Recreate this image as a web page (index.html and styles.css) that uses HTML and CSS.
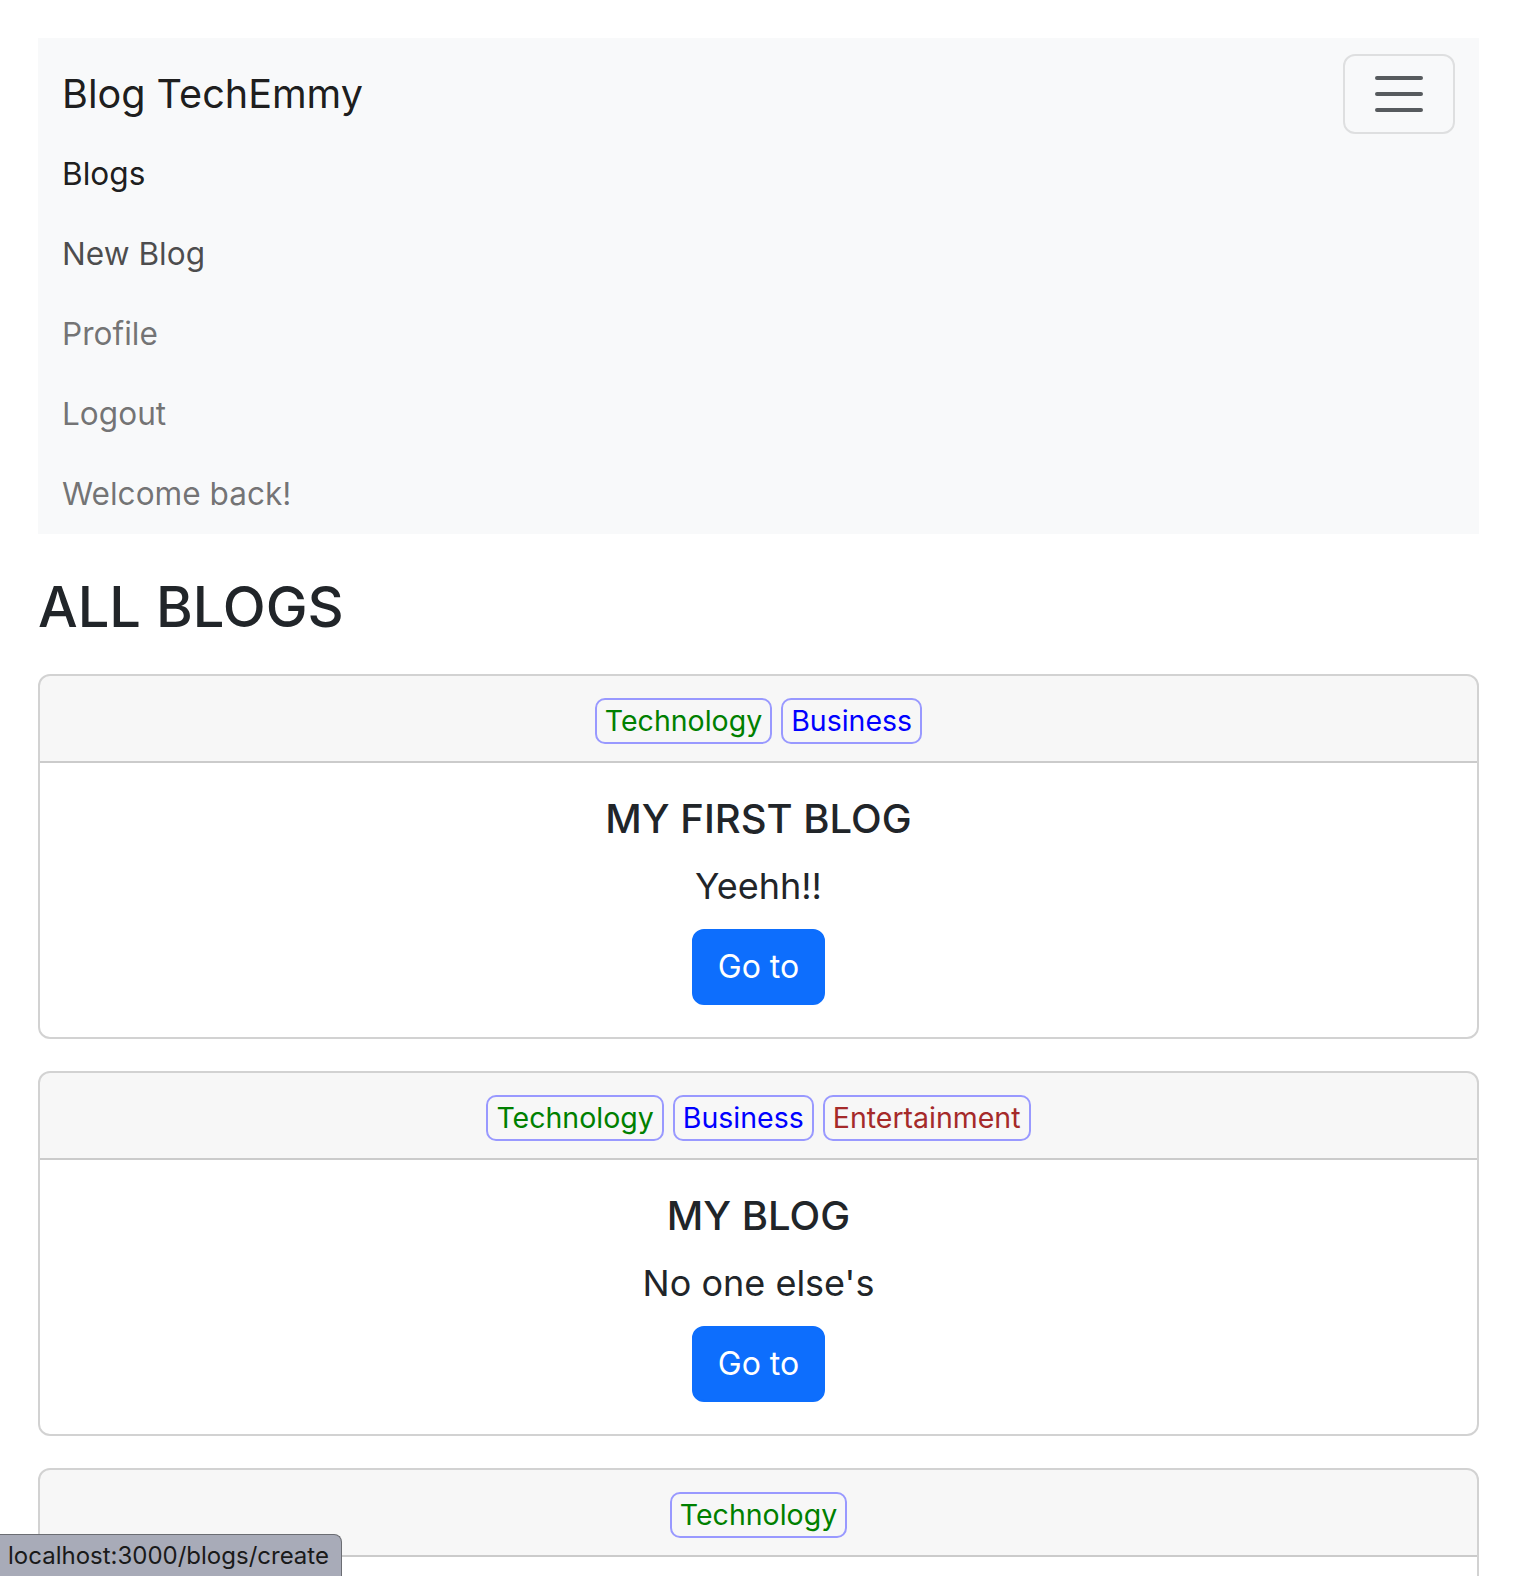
FILE: index.html
```html
<!DOCTYPE html>
<html lang="en">
<head>
<meta charset="utf-8">
<title>Blog TechEmmy</title>
<link rel="stylesheet" href="styles.css">
</head>
<body>
<div class="page">
  <nav class="navbar">
    <div class="nav-top">
      <a class="brand" href="#">Blog TechEmmy</a>
      <button class="toggler" aria-label="Toggle navigation">
        <svg class="toggler-icon" viewBox="0 0 30 30" width="60" height="60"><path d="M4 7h22M4 15h22M4 23h22" stroke="rgba(33,37,41,0.75)" stroke-width="2" stroke-linecap="round" fill="none"/></svg>
      </button>
    </div>
    <ul class="nav-list">
      <li><a class="nav-link active" href="#">Blogs</a></li>
      <li><a class="nav-link hover" href="#">New Blog</a></li>
      <li><a class="nav-link" href="#">Profile</a></li>
      <li><a class="nav-link" href="#">Logout</a></li>
      <li><span class="nav-link">Welcome back!</span></li>
    </ul>
  </nav>

  <h2 class="page-title">ALL BLOGS</h2>

  <div class="card">
    <div class="card-header">
      <span class="tag tag-tech">Technology</span>
      <span class="tag tag-biz">Business</span>
    </div>
    <div class="card-body">
      <h5 class="card-title">MY FIRST BLOG</h5>
      <p class="card-text">Yeehh!!</p>
      <a class="btn" href="#">Go to</a>
    </div>
  </div>

  <div class="card">
    <div class="card-header">
      <span class="tag tag-tech">Technology</span>
      <span class="tag tag-biz">Business</span>
      <span class="tag tag-ent">Entertainment</span>
    </div>
    <div class="card-body">
      <h5 class="card-title">MY BLOG</h5>
      <p class="card-text">No one else's</p>
      <a class="btn" href="#">Go to</a>
    </div>
  </div>

  <div class="card">
    <div class="card-header">
      <span class="tag tag-tech">Technology</span>
    </div>
    <div class="card-body card-body-empty"></div>
  </div>
</div>
<div class="status-bar">localhost:3000/blogs/create</div>
</body>
</html>
```

FILE: styles.css
```css
* { box-sizing: border-box; }
html, body {
  margin: 0;
  padding: 0;
  background: #fff;
}
body {
  font-family: Inter, "Noto Sans", "Liberation Sans", sans-serif;
  color: #212529;
  overflow: hidden;
  height: 1576px;
}
.page {
  padding: 38px 39px 0 38px;
}
.navbar {
  background: #f8f9fa;
  padding: 16px 24px 0 24px;
}
.nav-top {
  display: flex;
  justify-content: space-between;
  align-items: center;
}
.brand {
  font-size: 39.6px;
  line-height: 60px;
  padding: 10px 0;
  color: rgba(0,0,0,0.9);
  text-decoration: none;
}
.toggler {
  width: 112px;
  height: 80px;
  padding: 8px 24px;
  background: transparent;
  border: 2px solid rgba(0,0,0,0.1);
  border-radius: 12px;
  display: flex;
  align-items: center;
  justify-content: center;
}
.toggler-icon { display: block; }
.nav-list {
  list-style: none;
  margin: 0;
  padding: 0;
}
.nav-link {
  display: block;
  font-size: 31.6px;
  line-height: 48px;
  padding: 16px 0;
  color: rgba(0,0,0,0.55);
  text-decoration: none;
}
.nav-link.active { color: rgba(0,0,0,0.9); }
.nav-link.hover { color: rgba(0,0,0,0.7); }

.page-title {
  font-size: 56px;
  font-weight: 500;
  line-height: 68px;
  margin: 39px 0 33px 0;
  color: #212529;
}

.card {
  border: 2px solid rgba(0,0,0,0.175);
  border-radius: 12px;
  margin-bottom: 32px;
  overflow: hidden;
}
.card-header {
  background: rgba(0,0,0,0.03);
  border-bottom: 2px solid rgba(0,0,0,0.175);
  padding: 22px 32px 17px 32px;
  display: flex;
  justify-content: center;
  gap: 9px;
}
.tag {
  display: block;
  height: 46px;
  line-height: 42px;
  font-size: 28.5px;
  padding: 0 8px;
  border: 2px solid #9999ff;
  border-radius: 10px;
}
.tag-tech { color: #008000; }
.tag-biz { color: #0000ff; }
.tag-ent { color: #a52a2a; }

.card-body {
  padding: 32px;
  text-align: center;
}
.card-body-empty { height: 274px; }
.card-title {
  font-size: 40px;
  font-weight: 500;
  line-height: 48px;
  margin: 0 0 16px 0;
  color: #212529;
}
.card-text {
  font-size: 36px;
  line-height: 54px;
  margin: 0 0 16px 0;
}
.btn {
  display: inline-block;
  height: 76px;
  padding: 12px 24px;
  font-size: 32px;
  line-height: 48px;
  border: 2px solid #0d6efd;
  background: #0d6efd;
  color: #fff;
  border-radius: 12px;
  text-decoration: none;
}

.status-bar {
  position: fixed;
  left: 0;
  bottom: 0;
  height: 42px;
  width: 342px;
  padding: 2px 8px 0 8px;
  line-height: 38px;
  font-size: 24px;
  color: #1a1a1a;
  background: #a8abb8;
  border-top: 1px solid #6b6d73;
  border-right: 1px solid #6b6d73;
  border-top-right-radius: 8px;
}
```
